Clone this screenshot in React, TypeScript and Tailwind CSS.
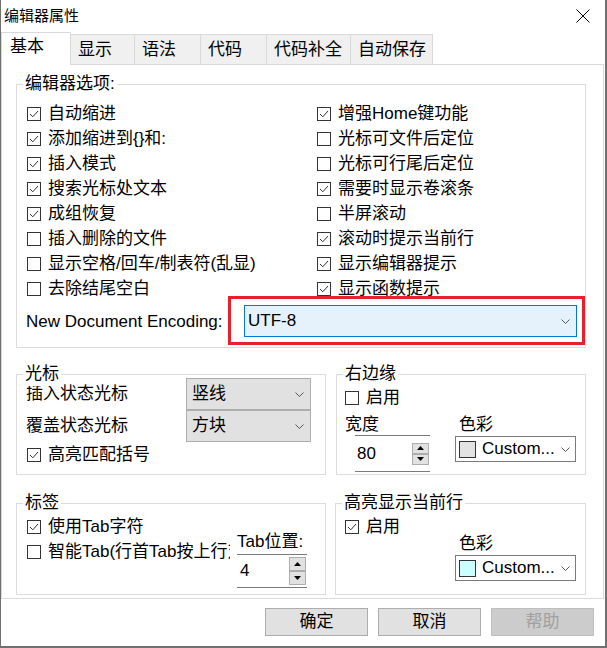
import React from 'react';

const Check: React.FC<{ on?: boolean }> = ({ on }) => (
  <span className="flex h-[14px] w-[14px] shrink-0 items-center justify-center border border-[#333333] bg-white">
    {on && (
      <svg width="12" height="12" viewBox="0 0 12 12">
        <path d="M2 6 L4.8 8.8 L10 3" fill="none" stroke="#333333" strokeWidth="1" />
      </svg>
    )}
  </span>
);

const CheckRow: React.FC<{ on?: boolean; label: string }> = ({ on, label }) => (
  <div className="flex h-[25px] items-center gap-[7px] whitespace-nowrap">
    <Check on={on} />
    <span>{label}</span>
  </div>
);

const Chevron: React.FC = () => (
  <svg width="9" height="5" viewBox="0 0 9 5" className="shrink-0">
    <path d="M0.5 0.5 L4.5 4.5 L8.5 0.5" fill="none" stroke="#555555" strokeWidth="1" />
  </svg>
);

const SpinButtons: React.FC<{ h: number }> = ({ h }) => (
  <div className="flex flex-col">
    <span className="flex w-[17px] items-center justify-center border border-[#adadad] bg-[#e1e1e1]" style={{ height: h }}>
      <svg width="7" height="4" viewBox="0 0 7 4"><polygon points="0,4 3.5,0 7,4" fill="#000" /></svg>
    </span>
    <span className="flex w-[17px] items-center justify-center border border-[#adadad] bg-[#e1e1e1]" style={{ height: h }}>
      <svg width="7" height="4" viewBox="0 0 7 4"><polygon points="0,0 3.5,4 7,0" fill="#000" /></svg>
    </span>
  </div>
);

const ColorCombo: React.FC<{ swatch: string }> = ({ swatch }) => (
  <div className="flex h-[26px] w-[121px] items-center border border-[#7a7a7a] bg-white pl-[3px] pr-[5px]">
    <span className="h-[17px] w-[17px] shrink-0 border border-[#333333]" style={{ background: swatch }} />
    <span className="ml-[6px] flex-1 leading-[20px]">Custom...</span>
    <Chevron />
  </div>
);

const Group: React.FC<{ title: string; className?: string; children?: React.ReactNode }> = ({ title, className, children }) => (
  <div className={`relative border border-[#dcdcdc] ${className ?? ''}`}>
    <span className="absolute -top-[13px] left-[6px] bg-white px-[2px] leading-[24px] whitespace-nowrap">{title}</span>
    {children}
  </div>
);

export default function App() {
  const tabs = [
    { name: '显示', w: 65 },
    { name: '语法', w: 67 },
    { name: '代码', w: 67 },
    { name: '代码补全', w: 85 },
    { name: '自动保存', w: 83 },
  ];

  return (
    <div className="flex h-[648px] w-[607px] flex-col border-b-2 border-l border-r-2 border-[#707070] bg-white font-['Liberation_Sans','Noto_Sans_CJK_SC',sans-serif] text-[17px] text-black">
      {/* title bar */}
      <div className="flex h-[32px] items-center justify-between pl-[3px] pr-[15px]">
        <span className="text-[15px]">编辑器属性</span>
        <svg width="14" height="14" viewBox="0 0 14 14">
          <path d="M0.5 0.5 L13.5 13.5 M13.5 0.5 L0.5 13.5" stroke="#000" strokeWidth="1" />
        </svg>
      </div>

      {/* tabs */}
      <div className="flex h-[32px] items-end">
        <div className="relative z-10 -mb-px h-[33px] w-[70px] border-x border-t border-[#d9d9d9] bg-white pl-[8px] pt-[2px] leading-[24px]">
          基本
        </div>
        {tabs.map(t => (
          <div
            key={t.name}
            className="-ml-px flex h-[30px] items-center border-x border-t border-[#d9d9d9] bg-[#f0f0f0] pl-[7px]"
            style={{ width: t.w }}
          >
            {t.name}
          </div>
        ))}
      </div>

      {/* page */}
      <div className="mr-[1px] flex h-[535px] flex-col border border-[#d9d9d9] pl-[14px]">
        {/* editor options */}
        <Group title="编辑器选项:" className="mt-[19px] h-[264px] w-[570px]">
          <div className="flex pl-[10px] pt-[16px]">
            <div className="w-[290px]">
              <CheckRow on label="自动缩进" />
              <CheckRow on label="添加缩进到{}和:" />
              <CheckRow on label="插入模式" />
              <CheckRow on label="搜索光标处文本" />
              <CheckRow on label="成组恢复" />
              <CheckRow label="插入删除的文件" />
              <CheckRow label="显示空格/回车/制表符(乱显)" />
              <CheckRow label="去除结尾空白" />
            </div>
            <div>
              <CheckRow on label="增强Home键功能" />
              <CheckRow label="光标可文件后定位" />
              <CheckRow label="光标可行尾后定位" />
              <CheckRow on label="需要时显示卷滚条" />
              <CheckRow label="半屏滚动" />
              <CheckRow on label="滚动时提示当前行" />
              <CheckRow on label="显示编辑器提示" />
              <CheckRow on label="显示函数提示" />
            </div>
          </div>
          <div className="-mt-[5px] flex h-[49px] items-center pl-[9px]">
            <span className="pt-[3px]">New Document Encoding:</span>
            <div className="relative z-10 ml-auto h-[49px] w-[357px] border-[3px] border-[#e8202a] bg-white pl-[13px] pt-[6px]">
              <div className="flex h-[32px] w-[333px] items-center border border-[#0078d7] bg-[#e5f1fb] pl-[3px] pr-[6px]">
                <span className="flex-1">UTF-8</span>
                <Chevron />
              </div>
            </div>
          </div>
        </Group>

        {/* cursor + right margin */}
        <div className="mt-[26px] flex gap-[10px]">
          <Group title="光标" className="h-[101px] w-[310px]">
            <div className="pl-[9px] pt-[3px]">
              {[
                ['插入状态光标', '竖线'],
                ['覆盖状态光标', '方块'],
              ].map(([l, v]) => (
                <div key={l} className="flex h-[32px] items-center">
                  <span className="w-[160px]">{l}</span>
                  <div className="flex h-[32px] w-[125px] items-center border border-[#adadad] bg-[#e1e1e1] pl-[5px] pr-[6px]">
                    <span className="flex-1">{v}</span>
                    <Chevron />
                  </div>
                </div>
              ))}
              <div className="pl-[1px]">
                <CheckRow on label="高亮匹配括号" />
              </div>
            </div>
          </Group>
          <Group title="右边缘" className="h-[101px] w-[250px]">
            <div className="pl-[8px] pt-[10px]">
              <CheckRow label="启用" />
              <div className="flex">
                <div className="w-[110px]">
                  <div className="mt-[4px] leading-[22px]">宽度</div>
                  <div className="-mt-px ml-[10px] flex h-[37px] w-[75px] items-center border-y border-[#7a7a7a] pr-px">
                    <span className="flex-1 pl-[2px]">80</span>
                    <SpinButtons h={11} />
                  </div>
                </div>
                <div>
                  <div className="mt-[4px] pl-[4px] leading-[22px]">色彩</div>
                  <ColorCombo swatch="#e3e3e3" />
                </div>
              </div>
            </div>
          </Group>
        </div>

        {/* tabs + highlight line */}
        <div className="mt-[28px] flex gap-[9px]">
          <Group title="标签" className="h-[92px] w-[310px]">
            <div className="flex">
              <div className="w-[213px] overflow-hidden pl-[10px] pt-[10px]">
                <CheckRow on label="使用Tab字符" />
                <CheckRow label="智能Tab(行首Tab按上行对齐)" />
              </div>
              <div className="ml-[7px] pt-[27px]">
                <div className="leading-[22px]">Tab位置:</div>
                <div className="mt-px flex h-[34px] w-[70px] items-center border-y border-[#7a7a7a] pr-px">
                  <span className="flex-1 pl-[3px]">4</span>
                  <SpinButtons h={14} />
                </div>
              </div>
            </div>
          </Group>
          <Group title="高亮显示当前行" className="h-[92px] w-[251px]">
            <div className="pl-[9px] pt-[10px]">
              <CheckRow on label="启用" />
            </div>
            <div className="-mt-[4px] pl-[123px] leading-[18px]">色彩</div>
            <div className="ml-[119px] mt-[2px]">
              <ColorCombo swatch="#ccffff" />
            </div>
          </Group>
        </div>
      </div>

      {/* buttons */}
      <div className="mt-[9px] flex justify-end gap-[10px] pr-[11px]">
        <button className="h-[28px] w-[103px] border border-[#adadad] bg-[#e1e1e1]">确定</button>
        <button className="h-[28px] w-[103px] border border-[#adadad] bg-[#e1e1e1]">取消</button>
        <button disabled className="h-[28px] w-[103px] border border-[#bfbfbf] bg-[#cccccc] text-[#a0a0a0]">
          帮助
        </button>
      </div>
    </div>
  );
}
